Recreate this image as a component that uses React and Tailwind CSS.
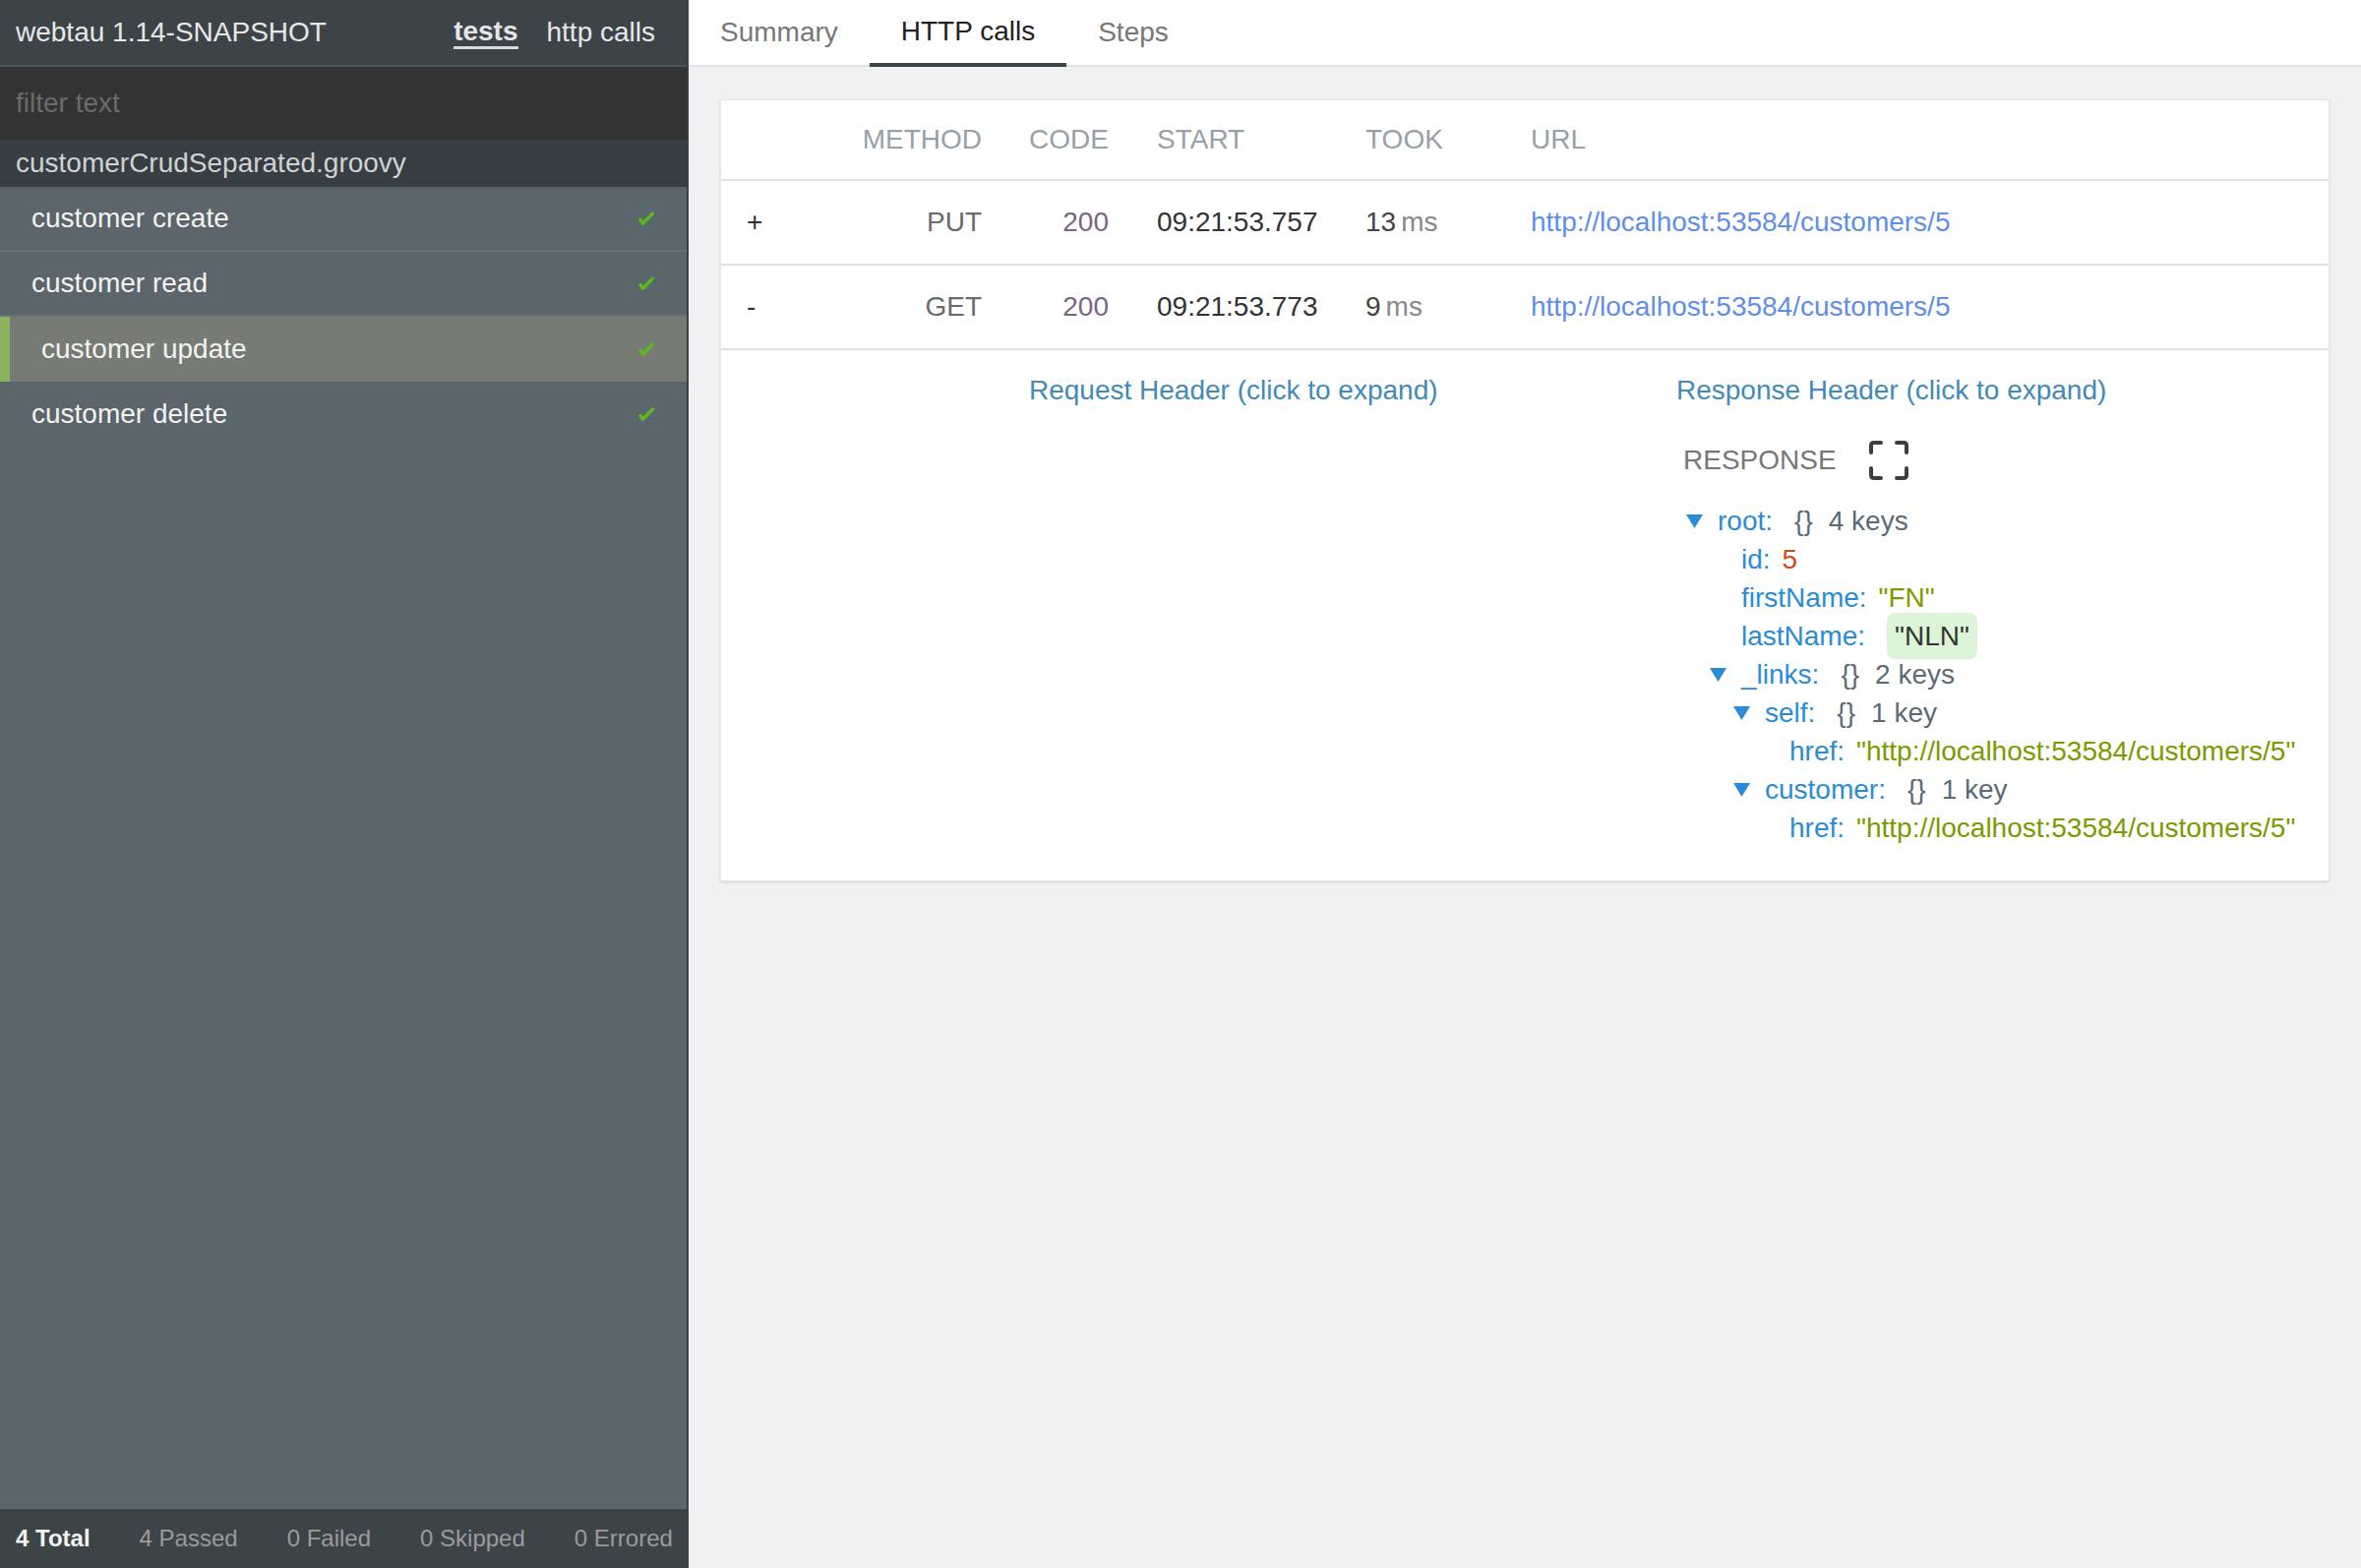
import React from "react";

const font = { fontFamily: '"Liberation Sans", Arial, Helvetica, sans-serif' };

const tests = [
    { name: "customer create", active: false },
    { name: "customer read", active: false },
    { name: "customer update", active: true },
    { name: "customer delete", active: false, last: true },
];

const calls = [
    { toggle: "+", method: "PUT", code: "200", start: "09:21:53.757", took: "13", url: "http://localhost:53584/customers/5" },
    { toggle: "-", method: "GET", code: "200", start: "09:21:53.773", took: "9", url: "http://localhost:53584/customers/5" },
];

// heavy check mark: thick short stroke, tapering long stroke
const Check = () => (
    <svg width="17" height="15" viewBox="0 0 17 15" className="shrink-0">
        <path d="M3 8.6 L5.4 12.2 L15.2 2.2" fill="none" stroke="#5cb81e" strokeWidth="3.4" strokeLinecap="round" strokeLinejoin="round" />
        <path d="M1.6 8.4 L4.6 7.6 L6.6 11.6 L5 13.6 Z" fill="#5cb81e" />
    </svg>
);

const Triangle = () => (
    <svg width="17" height="15" viewBox="0 0 17 15" className="shrink-0 mr-[15px]">
        <polygon points="0,1 17,1 8.5,15" fill="#2a8bd6" />
    </svg>
);

const FullScreenIcon = () => (
    <svg width="40" height="40" viewBox="0 0 40 40" fill="none" stroke="#3a3f44" strokeWidth="4" strokeLinecap="round" strokeLinejoin="round">
        <path d="M2 12 V5 Q2 2 5 2 H12" />
        <path d="M28 2 H35 Q38 2 38 5 V12" />
        <path d="M38 28 V35 Q38 38 35 38 H28" />
        <path d="M12 38 H5 Q2 38 2 35 V28" />
    </svg>
);

const Key = ({ children }) => <span className="text-[#2a8bd6]">{children}</span>;
const Braces = ({ count }) => (
    <>
        <span className="ml-[22px] text-[#5b6a74]">{"{}"}</span>
        <span className="ml-4 text-[#5b6a74]">{count}</span>
    </>
);

const Sidebar = () => (
    <div className="flex flex-col w-[700px] h-full shrink-0 bg-[#5a666c] border-r-2 border-[#3a4246]">
        <div className="flex items-center h-[68px] px-4 bg-[#3c4448] border-b-2 border-[#4b555a] text-[#e6e8e9]">
            <span>webtau 1.14-SNAPSHOT</span>
            <span className="ml-auto font-bold border-b-[3px] border-[#d9dcdd] leading-[30px] text-[#e4e6e7]">tests</span>
            <span className="ml-[29px] mr-[16px]">http calls</span>
        </div>
        <div className="flex items-center h-[74px] px-4 bg-[#333333] text-[#6b6b6b]">filter text</div>
        <div className="flex items-center h-[48px] px-4 bg-[#363e43] text-[#cfd3d5]">customerCrudSeparated.groovy</div>
        {tests.map((t) =>
            t.active ? (
                <div key={t.name} className="flex items-center h-[66px] pl-[32px] pr-[33px] bg-[#767b74] border-l-[10px] border-[#8eb35f] text-[#f3f3f3]">
                    <span>{t.name}</span>
                    <span className="ml-auto"><Check /></span>
                </div>
            ) : (
                <div key={t.name} className={`flex items-center h-[66px] pl-[32px] pr-[33px] text-[#f3f3f3] ${t.last ? "" : "border-b-2 border-[#68737a]"}`}>
                    <span>{t.name}</span>
                    <span className="ml-auto"><Check /></span>
                </div>
            )
        )}
        <div className="mt-auto flex shrink-0 items-center gap-[50px] h-[60px] px-4 bg-[#3c4448] text-[24px] leading-[28px] whitespace-nowrap text-[#9b9b9b]">
            <span className="font-bold text-[#f2f2f2]">4 Total</span>
            <span>4 Passed</span>
            <span>0 Failed</span>
            <span>0 Skipped</span>
            <span>0 Errored</span>
        </div>
    </div>
);

const cols = "grid grid-cols-[140px_149px_129px_212px_168px_1fr]";

const CallsTable = () => (
    <div>
        <div className={`${cols} h-[82px] items-center border-b-2 border-[#dfe2e6] text-[#98a0a8] whitespace-nowrap`}>
            <span />
            <span className="text-right pr-6">METHOD</span>
            <span className="text-right pr-6">CODE</span>
            <span className="pl-[25px]">START</span>
            <span className="pl-[25px]">TOOK</span>
            <span className="pl-[25px]">URL</span>
        </div>
        {calls.map((c) => (
            <div key={c.method} className={`${cols} h-[86px] items-center border-b-2 border-[#dfe2e6] whitespace-nowrap`}>
                <span className="pl-[26px] text-[#333]">{c.toggle}</span>
                <span className="text-right pr-6 text-[#6b6b6b]">{c.method}</span>
                <span className="text-right pr-6 text-[#7a6585]">{c.code}</span>
                <span className="pl-[25px] text-[#333]">{c.start}</span>
                <span className="pl-[25px]">
                    <span className="text-[#444]">{c.took}</span>
                    <span className="ml-[5px] text-[#888]">ms</span>
                </span>
                <span className="pl-[25px] text-[#5f8eea]">{c.url}</span>
            </div>
        ))}
    </div>
);

const Line = ({ className = "", children }) => (
    <div className={`flex items-center h-[39px] whitespace-nowrap ${className}`}>{children}</div>
);

const ResponseTree = () => (
    <div className="mt-[22px] ml-[10px]">
        <Line><Triangle /><Key>root:</Key><Braces count="4 keys" /></Line>
        <Line className="pl-[56px]"><Key>id:</Key><span className="ml-3 text-[#d24a14]">5</span></Line>
        <Line className="pl-[56px]"><Key>firstName:</Key><span className="ml-3 text-[#7c9a00]">"FN"</span></Line>
        <Line className="pl-[56px]">
            <Key>lastName:</Key>
            <span className="ml-[22px] flex items-center h-[47px] px-2 rounded-lg bg-[#dcf5d9] text-[#333]">"NLN"</span>
        </Line>
        <Line className="pl-[24px]"><Triangle /><Key>_links:</Key><Braces count="2 keys" /></Line>
        <Line className="pl-[48px]"><Triangle /><Key>self:</Key><Braces count="1 key" /></Line>
        <Line className="pl-[105px]"><Key>href:</Key><span className="ml-3 text-[#7c9a00]">"http://localhost:53584/customers/5"</span></Line>
        <Line className="pl-[48px]"><Triangle /><Key>customer:</Key><Braces count="1 key" /></Line>
        <Line className="pl-[105px]"><Key>href:</Key><span className="ml-3 text-[#7c9a00]">"http://localhost:53584/customers/5"</span></Line>
    </div>
);

const CallDetails = () => (
    <div className="flex pt-[25px] pb-[34px]">
        <div className="ml-[313px] w-[658px] shrink-0 leading-[32px] text-[#4389b9]">
            Request Header (click to expand)
        </div>
        <div className="flex flex-col">
            <div className="leading-[32px] text-[#4389b9]">Response Header (click to expand)</div>
            <div className="mt-[35px] flex items-center h-[40px] pl-[7px]">
                <span className="text-[#777]">RESPONSE</span>
                <span className="ml-[33px]"><FullScreenIcon /></span>
            </div>
            <ResponseTree />
        </div>
    </div>
);

export default function App() {
    return (
        <div style={font} className="flex w-full h-screen text-[28px] leading-[32px] overflow-hidden">
            <Sidebar />
            <div className="flex flex-col flex-1 h-full bg-[#f1f1f3]">
                <div className="flex h-[68px] shrink-0 bg-white border-b-2 border-[#e0e2e5]">
                    <span className="flex items-center px-8 text-[#777]">Summary</span>
                    <span className="flex items-center px-8 -mb-[2px] border-b-4 border-[#3d4549] text-[#222]">HTTP calls</span>
                    <span className="flex items-center px-8 text-[#777]">Steps</span>
                </div>
                <div className="pt-[33px] px-[32px]">
                    <div className="bg-white border border-[#e3e5e8] shadow-sm">
                        <CallsTable />
                        <CallDetails />
                    </div>
                </div>
            </div>
        </div>
    );
}
